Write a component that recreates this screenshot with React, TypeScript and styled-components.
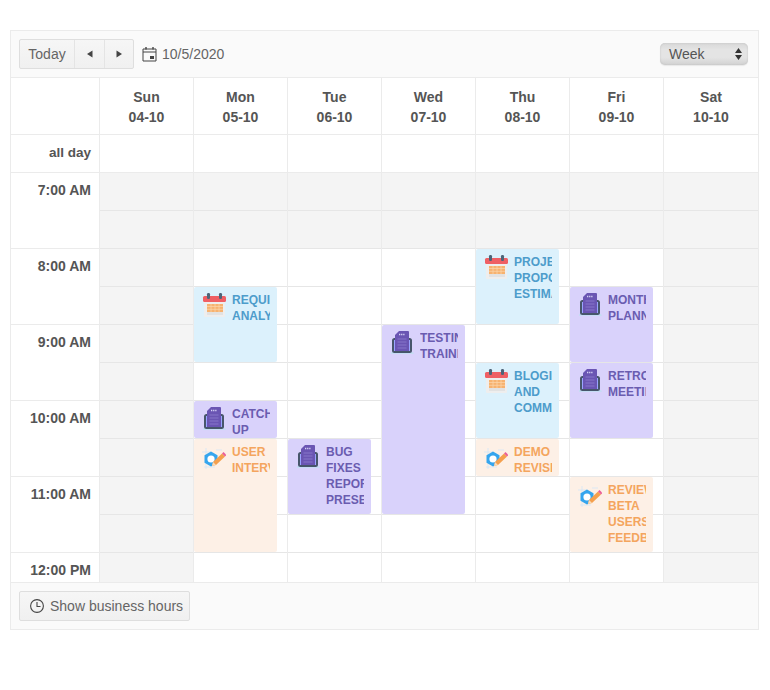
import React from "react";
import styled, { createGlobalStyle } from "styled-components";

const Global = createGlobalStyle`
  html, body { margin: 0; padding: 0; background: #fff; }
  body { font-family: "Liberation Sans", Arial, sans-serif; color: #515967; }
`;

const Page = styled.div`
  padding: 30px 0 0 10px;
  height: 660px;
  width: 760px;
  box-sizing: content-box;
  overflow: hidden;
`;
const Scheduler = styled.div`
  width: 749px;
  height: 600px;
  box-sizing: border-box;
  border: 1px solid #ebebeb;
  display: flex;
  flex-direction: column;
  background: #fff;
`;
const Toolbar = styled.div`
  height: 47px;
  box-sizing: border-box;
  flex: none;
  background: #fafafa;
  border-bottom: 1px solid #ebebeb;
  padding: 8px 10px 8px 8px;
  display: flex;
  align-items: center;
`;
const BtnGroup = styled.div`
  display: flex;
  height: 30px;
  border: 1px solid #dedede;
  border-radius: 2px;
  box-sizing: border-box;
  background: linear-gradient(#f6f6f6, #f0f0f0);
`;
const GroupBtn = styled.div<{ $w: number }>`
  width: ${(p) => p.$w}px;
  box-sizing: border-box;
  display: flex;
  align-items: center;
  justify-content: center;
  font-size: 14px;
  color: #656565;
  & + & { border-left: 1px solid #e4e4e4; }
`;
const DateLabel = styled.div`
  display: flex;
  align-items: center;
  gap: 5px;
  margin-left: 8px;
  font-size: 14px;
  color: #656565;
`;
const Spacer = styled.div`
  flex: 1;
`;
const ViewSelect = styled.div`
  width: 88px;
  height: 22px;
  margin-top: -1px;
  box-sizing: border-box;
  border-radius: 5px;
  background: linear-gradient(#d8d8d8, #e4e4e4 30%, #e4e4e4 65%, #d2d2d2);
  box-shadow: inset 0 0 2px #bdbdbd, 0 1px 1px #e8e8e8;
  display: flex;
  align-items: center;
  justify-content: space-between;
  padding: 0 5px 0 9px;
  font-size: 14px;
  color: #555;
`;
const Scroll = styled.div`
  flex: 1;
  min-height: 0;
  overflow: hidden;
  display: flex;
`;
const TimeCol = styled.div`
  width: 89px;
  flex: none;
  border-right: 1px solid #ebebeb;
  box-sizing: border-box;
`;
const Corner = styled.div`
  height: 57px;
  box-sizing: border-box;
  border-bottom: 1px solid #ebebeb;
`;
const AllDayLabel = styled.div`
  height: 38px;
  box-sizing: border-box;
  border-bottom: 1px solid #ebebeb;
  padding: 0 8px 3px 0;
  display: flex;
  align-items: center;
  justify-content: flex-end;
  font-size: 13.5px;
  font-weight: 700;
  color: #555;
`;
const TimeLabel = styled.div`
  height: 76px;
  box-sizing: border-box;
  border-bottom: 1px solid #ebebeb;
  padding: 9px 8px 0 0;
  text-align: right;
  font-size: 14px;
  line-height: 17px;
  font-weight: 700;
  color: #555;
`;
const DayCol = styled.div<{ $last?: boolean }>`
  width: 94px;
  flex: none;
  box-sizing: border-box;
  border-right: ${(p) => (p.$last ? "none" : "1px solid #ebebeb")};
  position: relative;
`;
const DayHead = styled.div`
  height: 57px;
  box-sizing: border-box;
  border-bottom: 1px solid #ebebeb;
  padding-top: 9px;
  text-align: center;
  font-size: 14px;
  line-height: 20px;
  font-weight: 700;
  color: #555;
`;
const AllDayCell = styled.div`
  height: 38px;
  box-sizing: border-box;
  border-bottom: 1px solid #ebebeb;
`;
const Slot = styled.div<{ $off: boolean }>`
  height: 38px;
  box-sizing: border-box;
  border-bottom: 1px solid #e6e6e6;
  background: ${(p) => (p.$off ? "#f4f4f4" : "#fff")};
`;
const tones = {
  blue: { bg: "#dcf1fc", fg: "#4d9ccb" },
  purple: { bg: "#d9d2fb", fg: "#6a5cb0" },
  orange: { bg: "#fdf0e6", fg: "#f4a55e" },
};
type Tone = keyof typeof tones;
const Event = styled.div<{ $tone: Tone; $slot: number; $span: number }>`
  position: absolute;
  left: 0;
  width: 83px;
  top: ${(p) => 95 + p.$slot * 38}px;
  height: ${(p) => p.$span * 38 - 1}px;
  background: ${(p) => tones[p.$tone].bg};
  color: ${(p) => tones[p.$tone].fg};
  border-radius: 2px;
  overflow: hidden;
  box-sizing: border-box;
  padding: 5px 7px 0 8px;
  display: flex;
  gap: 6px;
  font-size: 12px;
  line-height: 16px;
  font-weight: 700;
`;
const EventIcon = styled.svg`
  width: 24px;
  height: 24px;
  flex: none;
  margin-top: 1px;
`;
const EventText = styled.div`
  flex: 1;
  min-width: 0;
  overflow: hidden;
`;
const Footer = styled.div`
  height: 47px;
  box-sizing: border-box;
  flex: none;
  background: #fafafa;
  border-top: 1px solid #ebebeb;
  padding: 8px;
`;
const FooterBtn = styled.div`
  width: 171px;
  height: 30px;
  box-sizing: border-box;
  border: 1px solid #dedede;
  border-radius: 2px;
  background: linear-gradient(#f6f6f6, #f0f0f0);
  display: flex;
  align-items: center;
  gap: 5px;
  padding-left: 9px;
  font-size: 14px;
  color: #656565;
`;

const CalIcon = () => (
  <EventIcon viewBox="0 0 24 24">
    <rect x="2" y="4" width="21" height="20" rx="1" fill="#eeeeee" />
    <rect x="1" y="3" width="23" height="6" rx="1.5" fill="#ef5f64" />
    <rect x="5" y="0" width="3" height="6" rx="1.2" fill="#4e6478" />
    <rect x="17" y="0" width="3" height="6" rx="1.2" fill="#4e6478" />
    <rect x="5" y="11" width="16" height="8" fill="#f7b26f" />
    <path d="M5 13.5h16M5 16.3h16M9 11v8M13 11v8M17 11v8" stroke="#fbd5ae" strokeWidth=".7" />
    <rect x="5" y="19" width="16" height="3" fill="#e2e2e2" />
  </EventIcon>
);
const LaptopIcon = () => (
  <EventIcon viewBox="0 0 24 24">
    <path d="M1 21h22l1 2H1z" fill="#c6dcf4" />
    <rect x="2" y="7" width="20" height="15" rx="2.5" fill="#47566b" />
    <rect x="4" y="9" width="16" height="11" fill="#9aa4ff" />
    <path d="M9 0h9a1 1 0 0 1 1 1v19H5V4z" fill="#6a55b3" />
    <path d="M7.5 8h9M7.5 11h9M7.5 14h9M7.5 17h9" stroke="#8677c9" strokeWidth="1" />
    <path d="M9 3.5h6" stroke="#d6d2f5" strokeWidth="1.4" strokeDasharray="1.3 .8" />
  </EventIcon>
);
const GearIcon = () => (
  <EventIcon viewBox="0 0 24 24">
    <path d="M4 3v21M0 7h9M14 5h6M2 22h11" stroke="#d2e6f8" strokeWidth=".8" fill="none" />
    <path d="M9 6.5l6.5 3.7v7.6L9 21.5l-6.5-3.7v-7.6z" fill="#35a5ee" />
    <circle cx="9" cy="14" r="3.6" fill="#fff" />
    <path d="M11 17L20 8.5l3 3-9 8.5-4 1z" fill="#f5a04e" />
    <path d="M20 8.5l1.5-1.4 3 3L23 11.5z" fill="#ea5f98" />
    <path d="M11 17l3 3-4 1z" fill="#f7dcbc" />
  </EventIcon>
);
const icons = { blue: CalIcon, purple: LaptopIcon, orange: GearIcon };

type Ev = { slot: number; span: number; tone: Tone; text: string };
const days: { name: string; date: string; events: Ev[] }[] = [
  { name: "Sun", date: "04-10", events: [] },
  {
    name: "Mon",
    date: "05-10",
    events: [
      { slot: 3, span: 2, tone: "blue", text: "REQUIREMENT ANALYSIS" },
      { slot: 6, span: 1, tone: "purple", text: "CATCH UP" },
      { slot: 7, span: 3, tone: "orange", text: "USER INTERVIEW" },
    ],
  },
  {
    name: "Tue",
    date: "06-10",
    events: [{ slot: 7, span: 2, tone: "purple", text: "BUG FIXES REPORT PRESENTATION" }],
  },
  {
    name: "Wed",
    date: "07-10",
    events: [{ slot: 4, span: 5, tone: "purple", text: "TESTING TRAINING" }],
  },
  {
    name: "Thu",
    date: "08-10",
    events: [
      { slot: 2, span: 2, tone: "blue", text: "PROJECT PROPOSAL ESTIMATION" },
      { slot: 5, span: 2, tone: "blue", text: "BLOGIN AND COMMENTS" },
      { slot: 7, span: 1, tone: "orange", text: "DEMO REVISION" },
    ],
  },
  {
    name: "Fri",
    date: "09-10",
    events: [
      { slot: 3, span: 2, tone: "purple", text: "MONTHLY PLANNING" },
      { slot: 5, span: 2, tone: "purple", text: "RETRO MEETING" },
      { slot: 8, span: 2, tone: "orange", text: "REVIEW BETA USERS FEEDBACK" },
    ],
  },
  { name: "Sat", date: "10-10", events: [] },
];
const hours = ["7:00 AM", "8:00 AM", "9:00 AM", "10:00 AM", "11:00 AM", "12:00 PM", "1:00 PM"];
const slots = Array.from({ length: 14 }, (_, i) => i);

export default function App() {
  return (
    <Page>
      <Global />
      <Scheduler>
        <Toolbar>
          <BtnGroup>
            <GroupBtn $w={54}>Today</GroupBtn>
            <GroupBtn $w={30}>
              <svg width="8" height="8" viewBox="0 0 8 8">
                <path d="M6.5 0.5v7L1 4z" fill="#444" />
              </svg>
            </GroupBtn>
            <GroupBtn $w={29}>
              <svg width="8" height="8" viewBox="0 0 8 8">
                <path d="M1.5 0.5v7L7 4z" fill="#444" />
              </svg>
            </GroupBtn>
          </BtnGroup>
          <DateLabel>
            <svg width="15" height="16" viewBox="0 0 15 16" fill="none">
              <path d="M1 3h13v12H1zM1 6h13" stroke="#444" strokeWidth="1" />
              <path d="M4 1v2.5M11 1v2.5" stroke="#444" strokeWidth="1.4" />
              <rect x="8" y="10" width="4" height="3" fill="#444" />
            </svg>
            10/5/2020
          </DateLabel>
          <Spacer />
          <ViewSelect>
            Week
            <svg width="9" height="14" viewBox="0 0 9 14">
              <path d="M4.5 1l3.5 5H1zM4.5 13L1 8h7z" fill="#333" />
            </svg>
          </ViewSelect>
        </Toolbar>
        <Scroll>
          <TimeCol>
            <Corner />
            <AllDayLabel>all day</AllDayLabel>
            {hours.map((h) => (
              <TimeLabel key={h}>{h}</TimeLabel>
            ))}
          </TimeCol>
          {days.map((d, di) => (
            <DayCol key={d.name} $last={di === 6}>
              <DayHead>
                {d.name}
                <br />
                {d.date}
              </DayHead>
              <AllDayCell />
              {slots.map((s) => (
                <Slot key={s} $off={di === 0 || di === 6 || s < 2 || s >= 18} />
              ))}
              {d.events.map((e) => {
                const Icon = icons[e.tone];
                return (
                  <Event key={e.text} $tone={e.tone} $slot={e.slot} $span={e.span}>
                    <Icon />
                    <EventText>{e.text}</EventText>
                  </Event>
                );
              })}
            </DayCol>
          ))}
        </Scroll>
        <Footer>
          <FooterBtn>
            <svg width="16" height="16" viewBox="0 0 16 16" fill="none">
              <circle cx="8" cy="8" r="6.4" stroke="#444" strokeWidth="1.1" />
              <path d="M8 4v4.5h3.5" stroke="#444" strokeWidth="1.1" />
            </svg>
            Show business hours
          </FooterBtn>
        </Footer>
      </Scheduler>
    </Page>
  );
}
